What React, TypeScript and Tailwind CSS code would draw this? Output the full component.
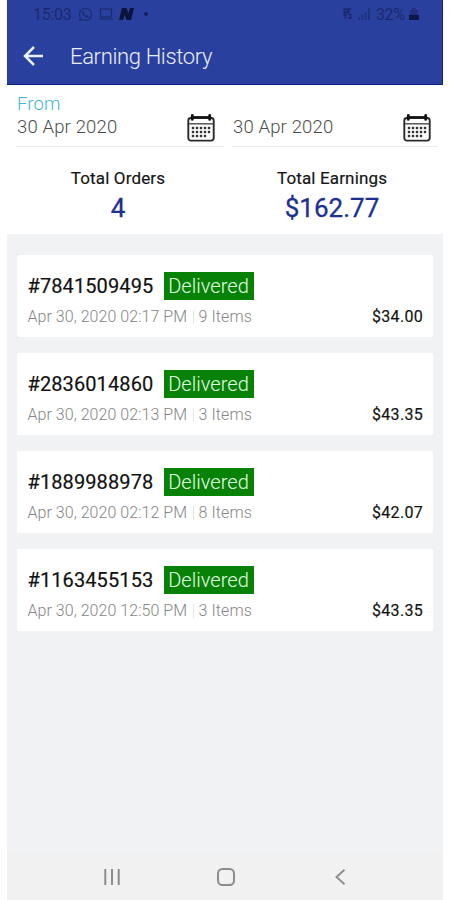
import React from "react";
import { FaWhatsapp } from "react-icons/fa";

const orders = [
  { id: "#7841509495", date: "Apr 30, 2020 02:17 PM", items: "9 Items", amount: "$34.00" },
  { id: "#2836014860", date: "Apr 30, 2020 02:13 PM", items: "3 Items", amount: "$43.35" },
  { id: "#1889988978", date: "Apr 30, 2020 02:12 PM", items: "8 Items", amount: "$42.07" },
  { id: "#1163455153", date: "Apr 30, 2020 12:50 PM", items: "3 Items", amount: "$43.35" },
];

function CalendarIcon() {
  const rows = [14, 18, 22];
  const cols = [6, 10, 14, 18, 22];
  return (
    <svg className="mt-[29px] h-[28px] w-[28px] shrink-0" viewBox="0 0 28 28" fill="none">
      <rect x="1.3" y="4" width="25.4" height="22.6" rx="2.5" stroke="#2a2a2a" strokeWidth="1.9" />
      <path d="M4 3.2H24" stroke="#111" strokeWidth="2.2" />
      <path d="M5.3 1.4V5.4M22.7 1.4V5.4" stroke="#111" strokeWidth="2.8" strokeLinecap="round" />
      <path d="M2 9.8H26" stroke="#555" strokeWidth="1.5" />
      {rows.map((y, r) =>
        cols.map((x, c) =>
          r === 2 && c === 4 ? null : (
            <rect key={`${r}-${c}`} x={x - 1.2} y={y - 1.2} width="2.4" height="2.4" fill="#333" />
          ),
        ),
      )}
    </svg>
  );
}

function StatusBar() {
  return (
    <div className="flex h-[28px] items-center pr-[23px] pl-[26px] text-[#1b2a70]">
      <span className="w-[38px] pt-px text-[16px] leading-[28px] tracking-[-0.3px] whitespace-nowrap">15:03</span>
      <FaWhatsapp className="ml-[7px] h-[15px] w-[15px]" />
      <svg className="ml-[6px] h-[12px] w-[14px]" viewBox="0 0 14 12" fill="none" stroke="currentColor" strokeWidth="1.2">
        <rect x="1.5" y="1" width="11" height="8" />
        <path d="M0 11H14" />
      </svg>
      <svg className="ml-[6px] h-[12px] w-[15px]" viewBox="0 0 15 12" fill="#0b143f">
        <path d="M3 0H7.5L9.5 5L11 0H15L12 12H7.5L5.5 7L4 12H0Z" />
      </svg>
      <span className="ml-[10px] h-[4px] w-[4px] rounded-full bg-[#15205c]" />
      <div className="ml-auto flex items-center">
        <svg className="h-[12px] w-[9px]" viewBox="0 0 9 13" fill="none" stroke="currentColor" strokeWidth="1.7">
          <path d="M1 1H4V5H1ZM6 0V6M6 1H9M0 8H4M2 6V12M5 11H8V7H5" />
        </svg>
        <svg className="ml-[6px] h-[12px] w-[12px] opacity-60" viewBox="0 0 12 12" fill="currentColor">
          <path d="M0 9H2V12H0ZM3.3 7H5.3V12H3.3ZM6.6 4H8.6V12H6.6ZM10 0H12V12H10Z" />
        </svg>
        <span className="ml-[6px] w-[29px] pt-px text-[16px] leading-[28px] tracking-[-0.4px] whitespace-nowrap">32%</span>
        <svg className="ml-[4px] h-[12px] w-[10px]" viewBox="0 0 10 12">
          <path d="M3 0H7V2H9V7H1V2H3Z" fill="#213180" />
          <path d="M0 7H10V12H0Z" fill="#0d174b" />
        </svg>
      </div>
    </div>
  );
}

function DateField({ label, className }: { label: string; className: string }) {
  return (
    <div className={`flex h-[62px] justify-between border-b border-[#ececec] ${className}`}>
      <div className="pt-[9px] pl-px font-light whitespace-nowrap">
        <div className="h-[20px] text-[18.5px] leading-[21px] tracking-[0.1px] text-[#40b5d3]">{label}</div>
        <div className="text-[18.5px] leading-[26px] tracking-[0.15px] text-[#4d4d4d]">30 Apr 2020</div>
      </div>
      <CalendarIcon />
    </div>
  );
}

function Summary({ label, value }: { label: string; value: string }) {
  return (
    <div className="w-[214px] text-center whitespace-nowrap">
      <div className="text-[17px] leading-[24px] tracking-[0.15px] text-[#151515] [-webkit-text-stroke:0.2px_#222]">{label}</div>
      <div className="pt-px text-[26px] leading-[35px] text-[#1d3191] [-webkit-text-stroke:0.3px_#1d3191]">{value}</div>
    </div>
  );
}

export default function App() {
  return (
    <div className="h-[900px] w-[450px] overflow-hidden bg-white pl-[7px] font-['Roboto',sans-serif]">
      <div className="flex h-full w-[436px] flex-col bg-[#f0f2f4]">
        <header className="h-[85px] shrink-0 border-r border-b border-[#0d1f85] bg-[#2a409e]">
          <StatusBar />
          <div className="flex h-[56px] items-center pl-[16px]">
            <svg className="h-[20px] w-[21px]" viewBox="0 0 21 20" fill="none" stroke="#e9efff" strokeWidth="2.5">
              <path d="M20 10H2.5M11 1L2 10L11 19" />
            </svg>
            <h1 className="ml-[26px] pt-px text-[22px] leading-[30px] font-light tracking-[-0.35px] whitespace-nowrap text-[#e9efff]">Earning History</h1>
          </div>
        </header>
        <section className="h-[149px] shrink-0 bg-white">
          <div className="flex">
            <DateField label="From" className="ml-[9px] w-[208px] pr-[9px]" />
            <DateField label="" className="ml-[8px] w-[206px] pr-[7px]" />
          </div>
          <div className="flex pt-[19px] pl-[4px]">
            <Summary label="Total Orders" value="4" />
            <Summary label="Total Earnings" value="$162.77" />
          </div>
        </section>
        <main className="flex flex-1 flex-col gap-4 px-[10px] pt-[21px]">
          {orders.map((o) => (
            <article key={o.id} className="h-[82px] rounded-[2px] bg-white pt-[16px] pr-[10px] pl-[10.5px] whitespace-nowrap">
              <div className="flex h-[29px] items-center">
                <span className="w-[136px] pt-[2px] text-[20px] leading-[29px] tracking-[0.1px] text-[#111] [-webkit-text-stroke:0.2px_#1b1b1b]">
                  {o.id}
                </span>
                <span className="h-[28px] w-[90px] bg-[#078207] text-center text-[20px] leading-[29px] font-light tracking-[0.05px] text-[#e4ffe4]">
                  Delivered
                </span>
              </div>
              <div className="flex h-[34px] items-center">
                <span className="w-[165px] text-[16px] font-light tracking-[0.04px] text-[#858585]">{o.date}</span>
                <span className="h-[14px] w-px bg-[#e6e6e6]" />
                <span className="ml-[5px] text-[16px] font-light tracking-[0.1px] text-[#858585]">{o.items}</span>
                <span className="ml-auto text-[16px] tracking-[0.3px] text-[#111] [-webkit-text-stroke:0.2px_#262626]">{o.amount}</span>
              </div>
            </article>
          ))}
        </main>
        <nav className="flex h-[47px] shrink-0 items-center bg-[#f1f1f1] pl-[97px] text-[#8c8c8c]">
          <svg className="h-[16px] w-[16px]" viewBox="0 0 16 16" stroke="currentColor" strokeWidth="2">
            <path d="M1.3 0V16M8 0V16M14.7 0V16" />
          </svg>
          <svg className="ml-[97px] h-[18px] w-[18px]" viewBox="0 0 18 18" fill="none" stroke="currentColor" strokeWidth="2">
            <rect x="1" y="1" width="16" height="16" rx="4.5" />
          </svg>
          <svg className="ml-[100px] h-[16px] w-[11px]" viewBox="0 0 11 16" fill="none" stroke="currentColor" strokeWidth="1.9">
            <path d="M9.5 .8L1.5 8L9.5 15.2" />
          </svg>
        </nav>
      </div>
    </div>
  );
}
